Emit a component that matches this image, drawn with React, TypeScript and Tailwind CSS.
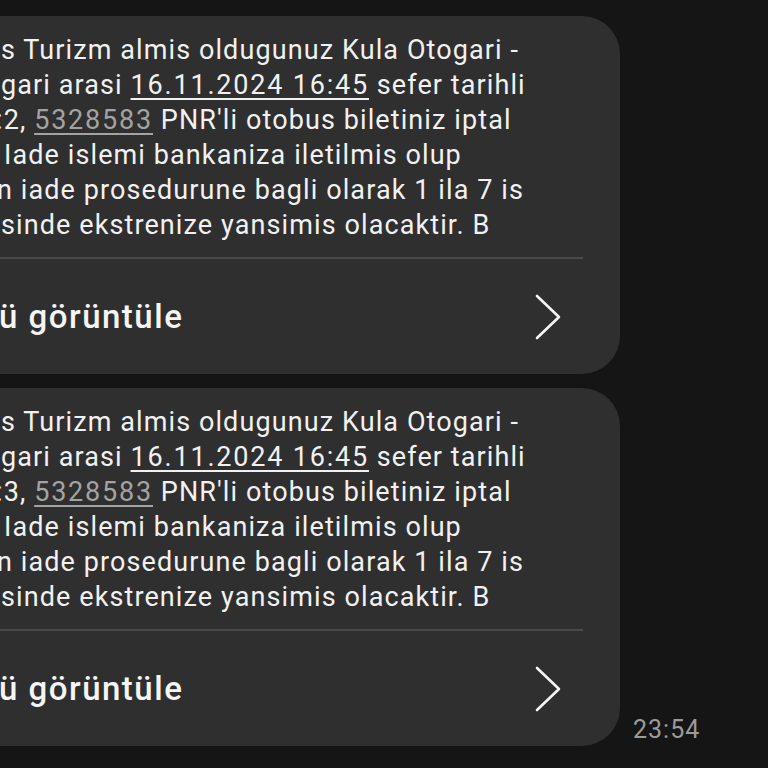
import React from 'react';

type Msg = { seat: string; time?: string };

const messages: Msg[] = [{ seat: '2' }, { seat: '3', time: '23:54' }];

function Chevron() {
  return (
    <svg width="28" height="46" viewBox="0 0 28 46" fill="none">
      <path d="M3 2 L25 23 L3 44" stroke="#f5f5f5" strokeWidth="2.6" strokeLinecap="round" strokeLinejoin="round" />
    </svg>
  );
}

function Bubble({ seat }: { seat: string }) {
  return (
    <div className="-ml-10 w-[660px] shrink-0 rounded-[38px] bg-[#2f2f2f] pl-10 pt-[17px]">
      <div className="whitespace-nowrap text-[27px] leading-[35px] tracking-[1.1px] text-[#f1f1f1]">
        <div className="ml-[1px]">s Turizm almis oldugunuz Kula Otogari -</div>
        <div className="ml-[1px]">
          gari arasi{' '}
          <span className="tracking-[1.8px] underline decoration-[1.5px] underline-offset-[4px]">16.11.2024 16:45</span>{' '}
          sefer tarihli
        </div>
        <div className="-ml-[4px]">
          :{seat},{' '}
          <span className="tracking-[1.8px] text-[#a3a3a3] underline decoration-[1.5px] underline-offset-[4px]">5328583</span>{' '}
          PNR'li otobus biletiniz iptal
        </div>
        <div className="ml-[4px]">Iade islemi bankaniza iletilmis olup</div>
        <div className="-ml-[3px]">n iade prosedurune bagli olarak 1 ila 7 is</div>
        <div className="ml-[1px]">sinde ekstrenize yansimis olacaktir. B</div>
      </div>
      <div className="mr-[37px] mt-[14px] h-[2px] bg-[#4a4a4a]" />
      <div className="flex h-[115px] items-center justify-between pr-[58px]">
        <span className="-ml-[1px] text-[33px] font-medium tracking-[1.5px] text-[#f5f5f5]">ü görüntüle</span>
        <Chevron />
      </div>
    </div>
  );
}

export default function App() {
  return (
    <div className="min-h-screen overflow-hidden bg-[#151515] pt-4 font-['Roboto',sans-serif]">
      <div className="flex flex-col gap-[14px]">
        {messages.map((m, i) => (
          <div key={i} className="flex items-end gap-[13px]">
            <Bubble seat={m.seat} />
            {m.time && <span className="-mb-[2px] text-[25px] tracking-[1px] text-[#9b9b9b]">{m.time}</span>}
          </div>
        ))}
      </div>
    </div>
  );
}
